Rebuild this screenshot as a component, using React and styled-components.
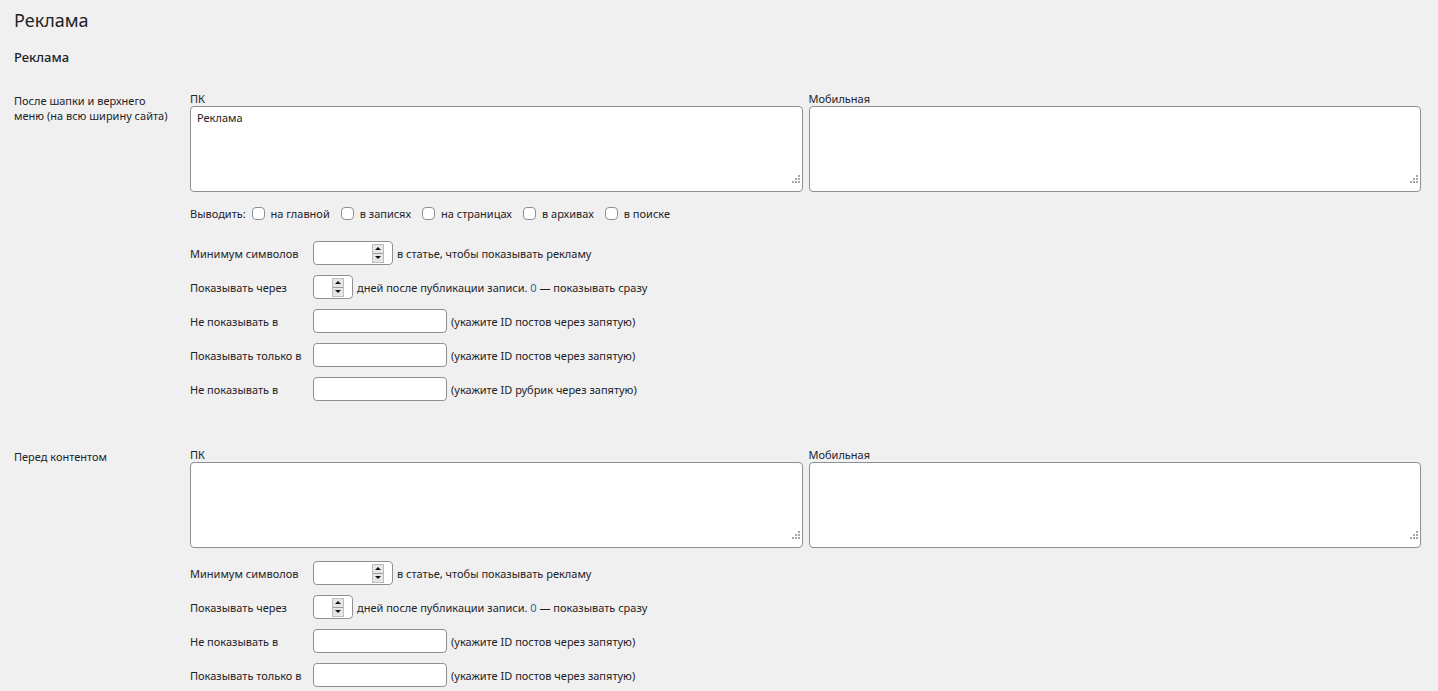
import React from 'react';
import styled, { createGlobalStyle } from 'styled-components';

const GlobalStyle = createGlobalStyle`
  body {
    margin: 0;
    background: #f0f0f1;
    color: #1d2327;
    font-family: "Noto Sans", "Open Sans", sans-serif;
    font-size: 11px;
  }
`;

const Page = styled.div`
  padding: 7px 17px 0 14px;
`;

const Title = styled.h1`
  margin: 0;
  font-size: 18px;
  font-weight: 400;
  line-height: 26px;
`;

const Subtitle = styled.h3`
  margin: 15px 0 0;
  font-size: 13px;
  font-weight: 500;
  line-height: 18px;
`;

const Section = styled.section`
  display: grid;
  grid-template-columns: 176px 1fr;
  margin-top: ${p => p.$gap}px;
`;

const SectionLabel = styled.div`
  padding-top: 2px;
  padding-right: 16px;
  line-height: 15px;
`;

const Body = styled.div`
  display: flex;
  flex-direction: column;
`;

const Editors = styled.div`
  display: grid;
  grid-template-columns: 1fr 1fr;
  gap: 6px;
`;

const Editor = styled.label`
  display: flex;
  flex-direction: column;
`;

const Caption = styled.span`
  line-height: 15px;
`;

// textarea with a dotted grip drawn over its bottom-right corner
const CodeWrap = styled.div`
  position: relative;
  display: flex;
  &::after {
    content: '';
    position: absolute;
    right: 9px;
    bottom: 9px;
    width: 2px;
    height: 2px;
    background: #a7a7a7;
    box-shadow: 3px 0 #a7a7a7, 6px 0 #a7a7a7, 3px -3px #a7a7a7, 6px -3px #a7a7a7,
      6px -6px #a7a7a7;
    pointer-events: none;
  }
`;

const Code = styled.textarea`
  flex: 1;
  box-sizing: border-box;
  height: 86px;
  padding: 3px 6px;
  border: 1px solid #8c8f94;
  border-radius: 4px;
  background: #fff;
  color: #1d2327;
  font: inherit;
  line-height: 15px;
  outline: none;
  resize: none;
`;

const Places = styled.div`
  display: flex;
  align-items: center;
  height: 18px;
  margin-top: 12px;
`;

const Check = styled.label`
  display: flex;
  align-items: center;
  margin-left: ${p => (p.$first ? 6 : 11)}px;
`;

const Box = styled.span`
  box-sizing: border-box;
  width: 13px;
  height: 13px;
  margin-right: 6px;
  border: 1px solid #8c8f94;
  border-radius: 4px;
  background: #fff;
`;

const Rows = styled.div`
  display: flex;
  flex-direction: column;
  gap: 10px;
  margin-top: ${p => p.$top}px;
`;

const Row = styled.div`
  display: flex;
  align-items: center;
  height: 24px;
`;

const RowLabel = styled.span`
  flex: 0 0 123px;
`;

const Field = styled.div`
  box-sizing: border-box;
  display: flex;
  align-items: center;
  justify-content: flex-end;
  width: ${p => p.$w}px;
  height: 24px;
  padding-right: 8px;
  border: 1px solid #8c8f94;
  border-radius: 4px;
  background: #fff;
`;

const Spin = styled.span`
  display: flex;
  flex-direction: column;
  width: 10px;
  height: 17px;
  border: 1px solid #bdbdbd;
  background: #e6e6e6;
`;

const Arrow = styled.span`
  flex: 1;
  display: flex;
  align-items: center;
  justify-content: center;
  & + & {
    border-top: 1px solid #9a9a9a;
  }
  &::before {
    content: '';
    border-left: 3px solid transparent;
    border-right: 3px solid transparent;
    ${p =>
      p.$down
        ? 'border-top: 3px solid #111;'
        : 'border-bottom: 3px solid #111;'}
  }
`;

const Hint = styled.span`
  margin-left: 4px;
`;

const Zero = styled.span`
  color: #2c5f98;
`;

const NumberField = ({ w }) => (
  <Field $w={w}>
    <Spin>
      <Arrow />
      <Arrow $down />
    </Spin>
  </Field>
);

const TextField = styled.input`
  box-sizing: border-box;
  width: 134px;
  height: 24px;
  border: 1px solid #8c8f94;
  border-radius: 4px;
  background: #fff;
  outline: none;
`;

const places = ['на главной', 'в записях', 'на страницах', 'в архивах', 'в поиске'];

const AdSection = ({ title, gap, pc, withPlaces, withTerms }) => (
  <Section $gap={gap}>
    <SectionLabel>{title}</SectionLabel>
    <Body>
      <Editors>
        <Editor>
          <Caption>ПК</Caption>
          <CodeWrap>
            <Code defaultValue={pc} />
          </CodeWrap>
        </Editor>
        <Editor>
          <Caption>Мобильная</Caption>
          <CodeWrap>
            <Code />
          </CodeWrap>
        </Editor>
      </Editors>
      {withPlaces && (
        <Places>
          Выводить:
          {places.map((p, i) => (
            <Check key={p} $first={i === 0}>
              <Box />
              {p}
            </Check>
          ))}
        </Places>
      )}
      <Rows $top={withPlaces ? 19 : 13}>
        <Row>
          <RowLabel>Минимум символов</RowLabel>
          <NumberField w={80} />
          <Hint>в статье, чтобы показывать рекламу</Hint>
        </Row>
        <Row>
          <RowLabel>Показывать через</RowLabel>
          <NumberField w={40} />
          <Hint>
            дней после публикации записи. <Zero>0</Zero> — показывать сразу
          </Hint>
        </Row>
        <Row>
          <RowLabel>Не показывать в</RowLabel>
          <TextField />
          <Hint>(укажите ID постов через запятую)</Hint>
        </Row>
        <Row>
          <RowLabel>Показывать только в</RowLabel>
          <TextField />
          <Hint>(укажите ID постов через запятую)</Hint>
        </Row>
        {withTerms && (
          <Row>
            <RowLabel>Не показывать в</RowLabel>
            <TextField />
            <Hint>(укажите ID рубрик через запятую)</Hint>
          </Row>
        )}
      </Rows>
    </Body>
  </Section>
);

export default function App() {
  return (
    <>
      <GlobalStyle />
      <Page>
        <Title>Реклама</Title>
        <Subtitle>Реклама</Subtitle>
        <AdSection
          title="После шапки и верхнего меню (на всю ширину сайта)"
          gap={25}
          pc="Реклама"
          withPlaces
          withTerms
        />
        <AdSection title="Перед контентом" gap={46} withTerms />
      </Page>
    </>
  );
}
